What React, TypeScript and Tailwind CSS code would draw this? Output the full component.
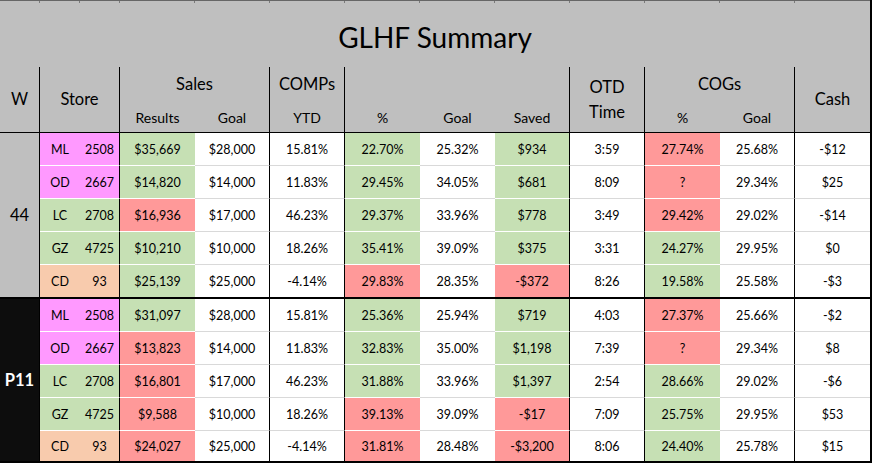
type Fill = "w" | "g" | "r" | "p" | "o";

type Row = { values: string[]; fills: string };

const bg: Record<Fill, string> = {
  w: "bg-white",
  g: "bg-[#c6e0b4]",
  r: "bg-[#ff9999]",
  p: "bg-[#ff99ff]",
  o: "bg-[#f8cbad]",
};

// columns that end on a black rule (index within the 12 data columns)
const VLINE = [1, 3, 4, 7, 8, 10];

const week44: Row[] = [
  { values: ["ML", "2508", "$35,669", "$28,000", "15.81%", "22.70%", "25.32%", "$934", "3:59", "27.74%", "25.68%", "-$12"], fills: "ppgwwgwgwrww" },
  { values: ["OD", "2667", "$14,820", "$14,000", "11.83%", "29.45%", "34.05%", "$681", "8:09", "?", "29.34%", "$25"], fills: "ppgwwgwgwrww" },
  { values: ["LC", "2708", "$16,936", "$17,000", "46.23%", "29.37%", "33.96%", "$778", "3:49", "29.42%", "29.02%", "-$14"], fills: "ggrwwgwgwrww" },
  { values: ["GZ", "4725", "$10,210", "$10,000", "18.26%", "35.41%", "39.09%", "$375", "3:31", "24.27%", "29.95%", "$0"], fills: "gggwwgwgwgww" },
  { values: ["CD", "93", "$25,139", "$25,000", "-4.14%", "29.83%", "28.35%", "-$372", "8:26", "19.58%", "25.58%", "-$3"], fills: "oogwwrwrwgww" },
];

const p11: Row[] = [
  { values: ["ML", "2508", "$31,097", "$28,000", "15.81%", "25.36%", "25.94%", "$719", "4:03", "27.37%", "25.66%", "-$2"], fills: "ppgwwgwgwrww" },
  { values: ["OD", "2667", "$13,823", "$14,000", "11.83%", "32.83%", "35.00%", "$1,198", "7:39", "?", "29.34%", "$8"], fills: "pprwwgwgwrww" },
  { values: ["LC", "2708", "$16,801", "$17,000", "46.23%", "31.88%", "33.96%", "$1,397", "2:54", "28.66%", "29.02%", "-$6"], fills: "ggrwwgwgwgww" },
  { values: ["GZ", "4725", "$9,588", "$10,000", "18.26%", "39.13%", "39.09%", "-$17", "7:09", "25.75%", "29.95%", "$53"], fills: "ggrwwrwrwgww" },
  { values: ["CD", "93", "$24,027", "$25,000", "-4.14%", "31.81%", "28.48%", "-$3,200", "8:06", "24.40%", "25.78%", "$15"], fills: "oorwwrwrwgww" },
];

const COLS = "grid grid-cols-[40px_40px_40px_repeat(10,75px)]";

function Group({ label, dark, rows, rowsClass }: { label: string; dark?: boolean; rows: Row[]; rowsClass: string }) {
  return (
    <div className={`${COLS} ${rowsClass}`}>
      <div
        className={`row-span-5 flex items-center justify-center border-r border-b-2 border-black text-[16.5px] ${
          dark ? "bg-[#0d0d0d] font-bold text-white" : "bg-[#bfbfbf] text-black"
        }`}
      >
        {label}
      </div>
      {rows.map((row, ri) =>
        row.values.map((v, ci) => {
          const fill = row.fills[ci] as Fill;
          const last = ri === rows.length - 1;
          const bottom = last
            ? "border-b-2 border-b-black"
            : fill === "w"
              ? "border-b border-b-[#d9d9d9]"
              : "border-b border-b-white";
          const right = VLINE.includes(ci) ? "border-r border-r-black" : "";
          return (
            <div
              key={`${ri}-${ci}`}
              className={`flex items-center justify-center pt-[2px] text-[12.5px] text-black ${bg[fill]} ${bottom} ${right}`}
            >
              {v}
            </div>
          );
        })
      )}
    </div>
  );
}

export default function App() {
  return (
    <div className="h-[463px] w-[872px] overflow-hidden border-r-2 border-black bg-[#bfbfbf] [font-family:Lato,sans-serif]">
      <div className={`${COLS} h-[3px] border-t border-[#666666]`}>
        {Array.from({ length: 12 }).map((_, i) => (
          <div key={i} className="border-r border-[#7a7a7a]" />
        ))}
      </div>
      <div className="flex h-[64px] items-center justify-center pt-[4px] text-[28px] text-black">GLHF Summary</div>

      <div className={`${COLS} grid-rows-[33px_33px] text-black`}>
        <div className="col-start-1 row-start-1 row-span-2 flex items-center justify-center border-r border-b border-black text-[16.5px]">
          W
        </div>
        <div className="col-start-2 col-span-2 row-start-1 row-span-2 flex items-center justify-center border-r border-b border-black text-[16.5px]">
          Store
        </div>
        <div className="col-start-4 col-span-2 row-start-1 flex items-center justify-center border-r border-black pt-[2px] text-[16.5px]">
          Sales
        </div>
        <div className="col-start-6 row-start-1 flex items-center justify-center border-r border-black pt-[2px] text-[16.5px]">
          COMPs
        </div>
        <div className="col-start-7 col-span-3 row-start-1 border-r border-black" />
        <div className="col-start-10 row-start-1 row-span-2 flex flex-col items-center justify-center border-r border-b border-black text-[16.5px] leading-[25px]">
          <span>OTD</span>
          <span>Time</span>
        </div>
        <div className="col-start-11 col-span-2 row-start-1 flex items-center justify-center border-r border-black pt-[2px] text-[16.5px]">
          COGs
        </div>
        <div className="col-start-13 row-start-1 row-span-2 flex items-center justify-center border-b border-black text-[16.5px]">
          Cash
        </div>

        <div className="col-start-4 row-start-2 flex items-center justify-center border-b border-black pt-[3px] text-[14px]">Results</div>
        <div className="col-start-5 row-start-2 flex items-center justify-center border-r border-b border-black pt-[3px] text-[14px]">Goal</div>
        <div className="col-start-6 row-start-2 flex items-center justify-center border-r border-b border-black pt-[3px] text-[14px]">YTD</div>
        <div className="col-start-7 row-start-2 flex items-center justify-center border-b border-black pt-[3px] text-[14px]">%</div>
        <div className="col-start-8 row-start-2 flex items-center justify-center border-b border-black pt-[3px] text-[14px]">Goal</div>
        <div className="col-start-9 row-start-2 flex items-center justify-center border-r border-b border-black pt-[3px] text-[14px]">Saved</div>
        <div className="col-start-11 row-start-2 flex items-center justify-center border-b border-black pt-[3px] text-[14px]">%</div>
        <div className="col-start-12 row-start-2 flex items-center justify-center border-r border-b border-black pt-[3px] text-[14px]">Goal</div>
      </div>

      <Group label="44" rows={week44} rowsClass="grid-rows-[33px_33px_33px_33px_34px]" />
      <Group label="P11" dark rows={p11} rowsClass="grid-rows-[33px_33px_33px_33px_32px]" />
    </div>
  );
}
